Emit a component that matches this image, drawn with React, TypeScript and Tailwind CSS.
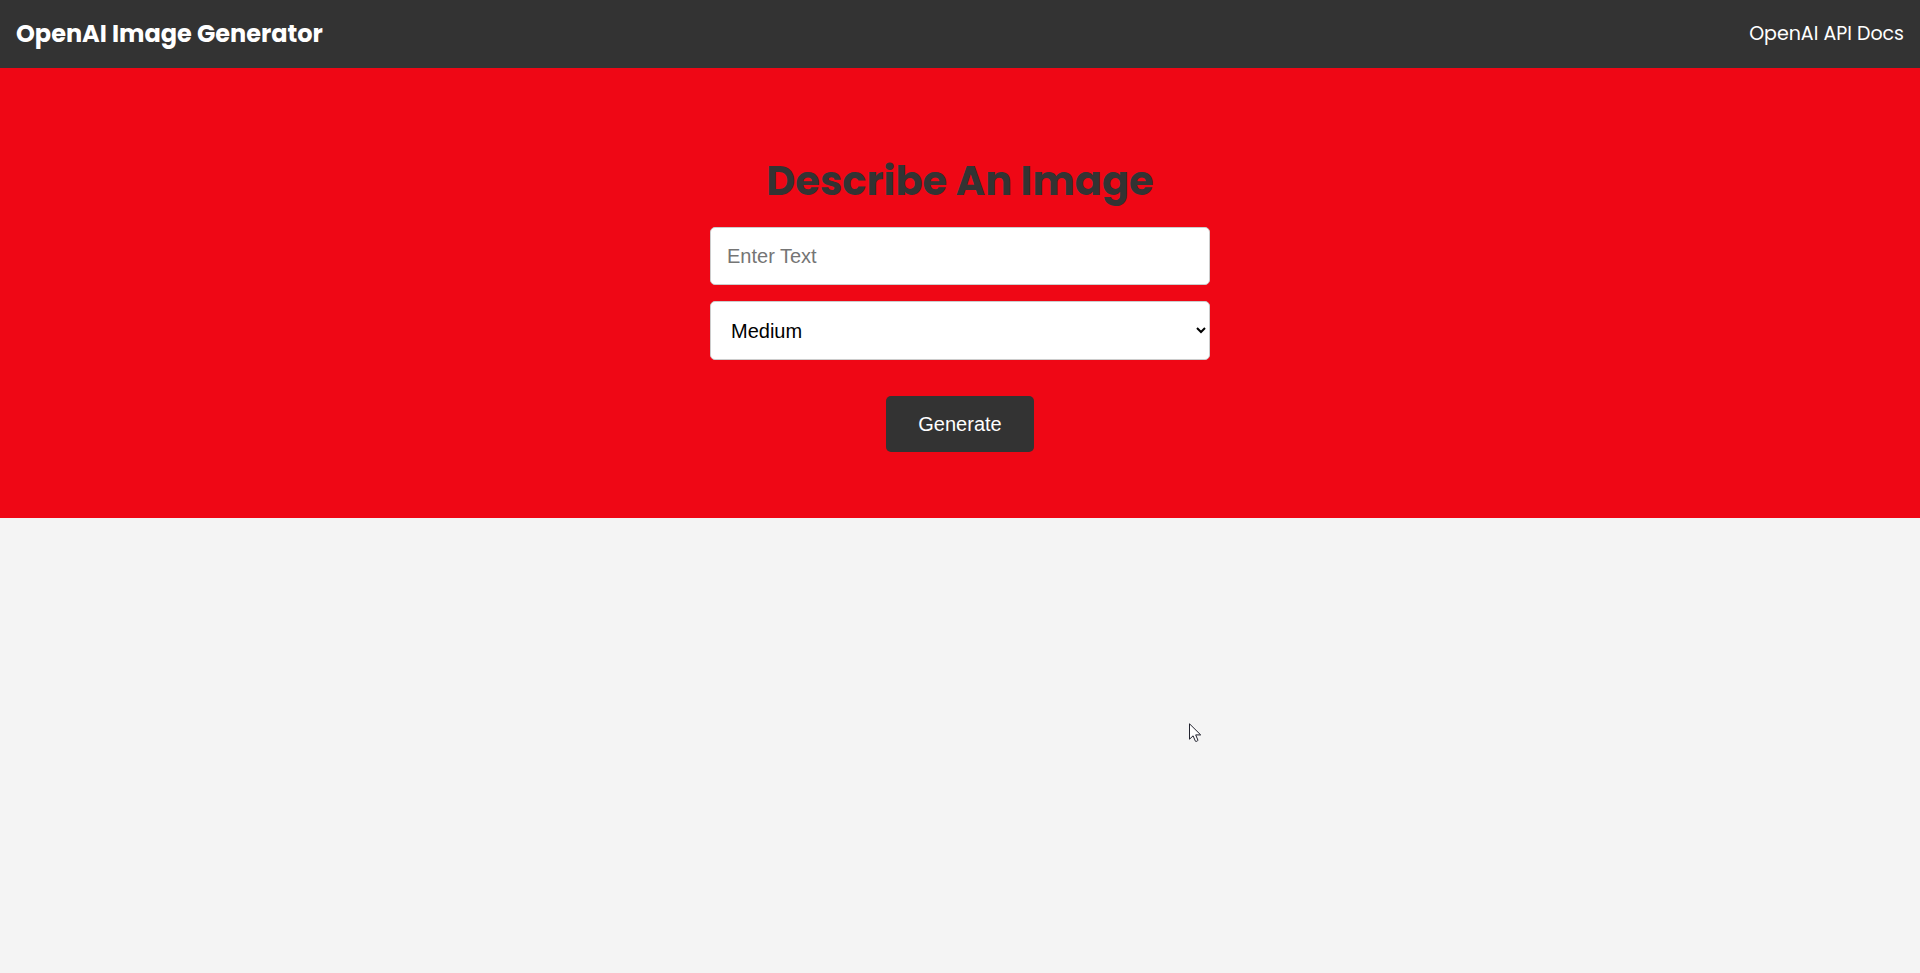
import { useState } from "react";

function Header() {
  return (
    <header className="flex h-17 items-center justify-between bg-[#333] px-4 text-white">
      <h1 className="text-2xl leading-9 font-bold">
        <a href="/">OpenAI Image Generator</a>
      </h1>
      <a href="https://beta.openai.com/docs" className="text-[19px] leading-7">
        OpenAI API Docs
      </a>
    </header>
  );
}

function ImageForm() {
  const [prompt, setPrompt] = useState("");
  const [size, setSize] = useState("medium");

  return (
    <form
      className="mx-auto flex max-w-[500px] flex-col items-center"
      onSubmit={(event) => event.preventDefault()}
    >
      <h2 className="mb-4 text-center text-[40px] leading-[60px] font-bold text-[#333]">
        Describe An Image
      </h2>
      <input
        type="text"
        aria-label="Image description"
        placeholder="Enter Text"
        value={prompt}
        onChange={(event) => setPrompt(event.target.value)}
        className="mb-4 h-[58px] w-full rounded-[5px] border border-[#ccc] bg-white px-4 font-['Liberation_Sans',Arial,sans-serif] text-xl text-black placeholder:text-[#757575]"
      />
      <select
        aria-label="Image size"
        value={size}
        onChange={(event) => setSize(event.target.value)}
        className="h-[59px] w-full rounded-[5px] border border-[#ccc] bg-white pl-4 font-['Liberation_Sans',Arial,sans-serif] text-xl text-black"
      >
        <option value="small">Small</option>
        <option value="medium">Medium</option>
        <option value="large">Large</option>
      </select>
      <button
        type="submit"
        className="mt-9 h-14 rounded-[5px] bg-[#333] px-8 font-['Liberation_Sans',Arial,sans-serif] text-xl text-white"
      >
        Generate
      </button>
    </form>
  );
}

function Pointer() {
  return (
    <svg
      className="pointer-events-none absolute top-[723px] left-[1189px]"
      width="13"
      height="20"
      viewBox="0 0 13 20"
      aria-hidden="true"
    >
      <path
        d="M.5.8v15.4l3.6-3.4 2.3 5.4c.3.7 2.8-.3 2.5-1.1l-2.2-5.2h5z"
        fill="#fff"
        stroke="#22232f"
      />
    </svg>
  );
}

export default function App() {
  return (
    <div className="relative min-h-screen bg-[#f4f4f4] font-[Poppins,Inter,sans-serif]">
      <Header />
      <main>
        <section className="bg-[#ef0715] px-4 pt-[83px] pb-[66px]">
          <ImageForm />
        </section>
      </main>
      <Pointer />
    </div>
  );
}
